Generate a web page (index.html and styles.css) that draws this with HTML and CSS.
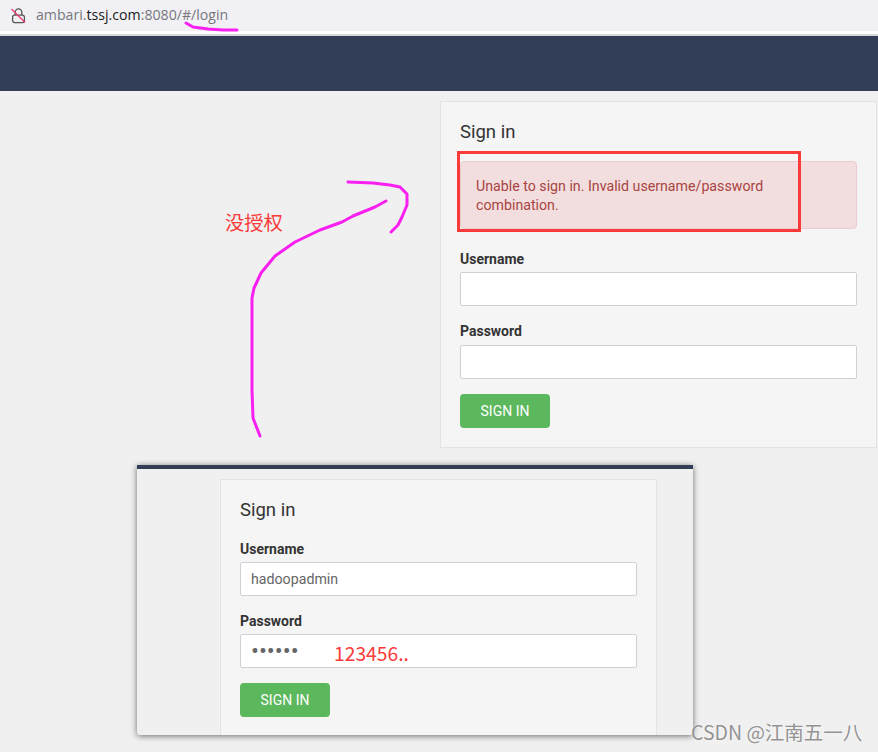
FILE: index.html
```html
<!DOCTYPE html>
<html lang="en">
<head>
<meta charset="UTF-8">
<title>Ambari login</title>
<link rel="stylesheet" href="styles.css">
</head>
<body>
  <!-- browser address bar -->
  <div class="address-bar">
    <svg class="lock-icon" width="16" height="16" viewBox="0 0 16 16">
      <path d="M4.2 7V4.2a3.3 3.3 0 0 1 6.6 0V7" fill="none" stroke="#555" stroke-width="1.3"/>
      <rect x="1.6" y="7.2" width="11.8" height="7.4" rx="2" fill="none" stroke="#555" stroke-width="1.3"/>
      <path d="M0.5 1L14 14.5" stroke="#f0386b" stroke-width="1.3"/>
    </svg>
    <span class="url">ambari.<b>tssj.com</b>:8080/#/login</span>
  </div>
  <div class="bar-edge"></div>

  <div class="top-bar"></div>

  <main class="page">
    <div class="panel">
      <h2>Sign in</h2>
      <div class="alert">Unable to sign in. Invalid username/password combination.</div>
      <label>Username</label>
      <input type="text">
      <label>Password</label>
      <input type="text">
      <button>SIGN IN</button>
    </div>
  </main>

  <!-- pasted screenshot of the filled form -->
  <div class="pasted-shot">
    <div class="panel">
      <h2>Sign in</h2>
      <label>Username</label>
      <input type="text" value="hadoopadmin">
      <label>Password</label>
      <input class="dots" type="password" value="123456">
      <button>SIGN IN</button>
    </div>
  </div>

  <!-- hand drawn notes on top -->
  <svg class="scribbles" width="878" height="752" viewBox="0 0 878 752">
    <polyline points="186,23 193,27 208,29 223,30 237,30"/>
    <polyline points="260,436 253,418 252,390 252,298 254,288 261,273 275,256 295,242 320,230 342,222 353,216 375,207 386,201"/>
    <polyline points="348,182 373,183 390,185 400,187 407,194 407,205 402,217 398,225 391,232"/>
  </svg>
  <div class="red-box"></div>
  <span class="note note-auth">没授权</span>
  <span class="note note-pass">123456..</span>
  <span class="watermark">CSDN @江南五一八</span>
</body>
</html>
```

FILE: styles.css
```css
body {
  margin: 0;
  height: 752px;
  overflow: hidden;
  position: relative;
  background: #f0f0f0;
  font-family: Roboto, sans-serif;
  font-size: 14px;
  color: #333;
}

.address-bar {
  display: flex;
  align-items: center;
  gap: 9px;
  height: 31px;
  padding-left: 11px;
  background: #f1f1f5;
}
.url {
  font-family: "Open Sans", sans-serif;
  font-size: 14.15px;
  line-height: 29px;
  padding-bottom: 2px;
  color: #77777c;
}
.url b {
  font-weight: 400;
  color: #1a1a1a;
}
.bar-edge {
  height: 3px;
  background: #fff;
  border-bottom: 2px solid #d9d9dc;
}

.top-bar {
  height: 55px;
  background: #323e58;
}

.page {
  display: flex;
  justify-content: flex-end;
  padding: 10px 1px 0 0;
}

.panel {
  width: 437px;
  box-sizing: border-box;
  padding: 19px;
  background: #f5f5f5;
  border: 1px solid #e3e3e3;
}
.panel h2 {
  margin: 0 0 18px;
  font-size: 18.5px;
  font-weight: 400;
  line-height: 22px;
  color: #333;
}
.panel label {
  display: block;
  margin-bottom: 3px;
  font-weight: 700;
  line-height: 20px;
}
.page input + label {
  margin-bottom: 4px;
}
.panel input {
  display: block;
  width: 100%;
  height: 34px;
  box-sizing: border-box;
  margin-bottom: 15px;
  padding: 0 10px;
  background: #fff;
  border: 1px solid #cfd0d8;
  border-radius: 2px;
  font-family: Roboto, sans-serif;
  font-size: 14.2px;
  color: #666;
}
.panel input.dots {
  font-size: 23.5px;
}
.panel button {
  display: block;
  width: 90px;
  height: 34px;
  background: #5cb85c;
  border: none;
  border-radius: 4px;
  font-family: Roboto, sans-serif;
  font-size: 14px;
  color: #fff;
}

.alert {
  margin-bottom: 20px;
  padding: 15px 15px 13px;
  background: #f2dede;
  border: 1px solid #ebccd1;
  border-radius: 4px;
  color: #a94442;
  font-size: 14.2px;
  line-height: 19px;
}

.pasted-shot {
  position: absolute;
  left: 137px;
  top: 465px;
  width: 556px;
  height: 270px;
  box-sizing: border-box;
  padding: 10px 0 0 83px;
  overflow: hidden;
  background: #f0f0f0;
  border-top: 4px solid #323e58;
  border-radius: 0 0 3px 3px;
  box-shadow: 0 1px 6px rgba(0, 0, 0, 0.55);
}

.scribbles {
  position: absolute;
  left: 0;
  top: 0;
}
.scribbles polyline {
  fill: none;
  stroke: #f81ff0;
  stroke-width: 3;
  stroke-linecap: round;
  stroke-linejoin: round;
}

.red-box {
  position: absolute;
  left: 457px;
  top: 151px;
  width: 338px;
  height: 75px;
  border: 3px solid #fb3a3a;
}

.note {
  position: absolute;
  font-family: "Noto Sans CJK SC", sans-serif;
  font-size: 19.3px;
  color: #fb3a3a;
}
.note-auth {
  left: 225px;
  top: 208px;
}
.note-pass {
  left: 334px;
  top: 639px;
}

.watermark {
  position: absolute;
  left: 691px;
  top: 717px;
  font-family: "Noto Sans CJK SC", sans-serif;
  font-size: 19.5px;
  color: #929292;
  text-shadow: 0 0 2px #fff;
}
```
